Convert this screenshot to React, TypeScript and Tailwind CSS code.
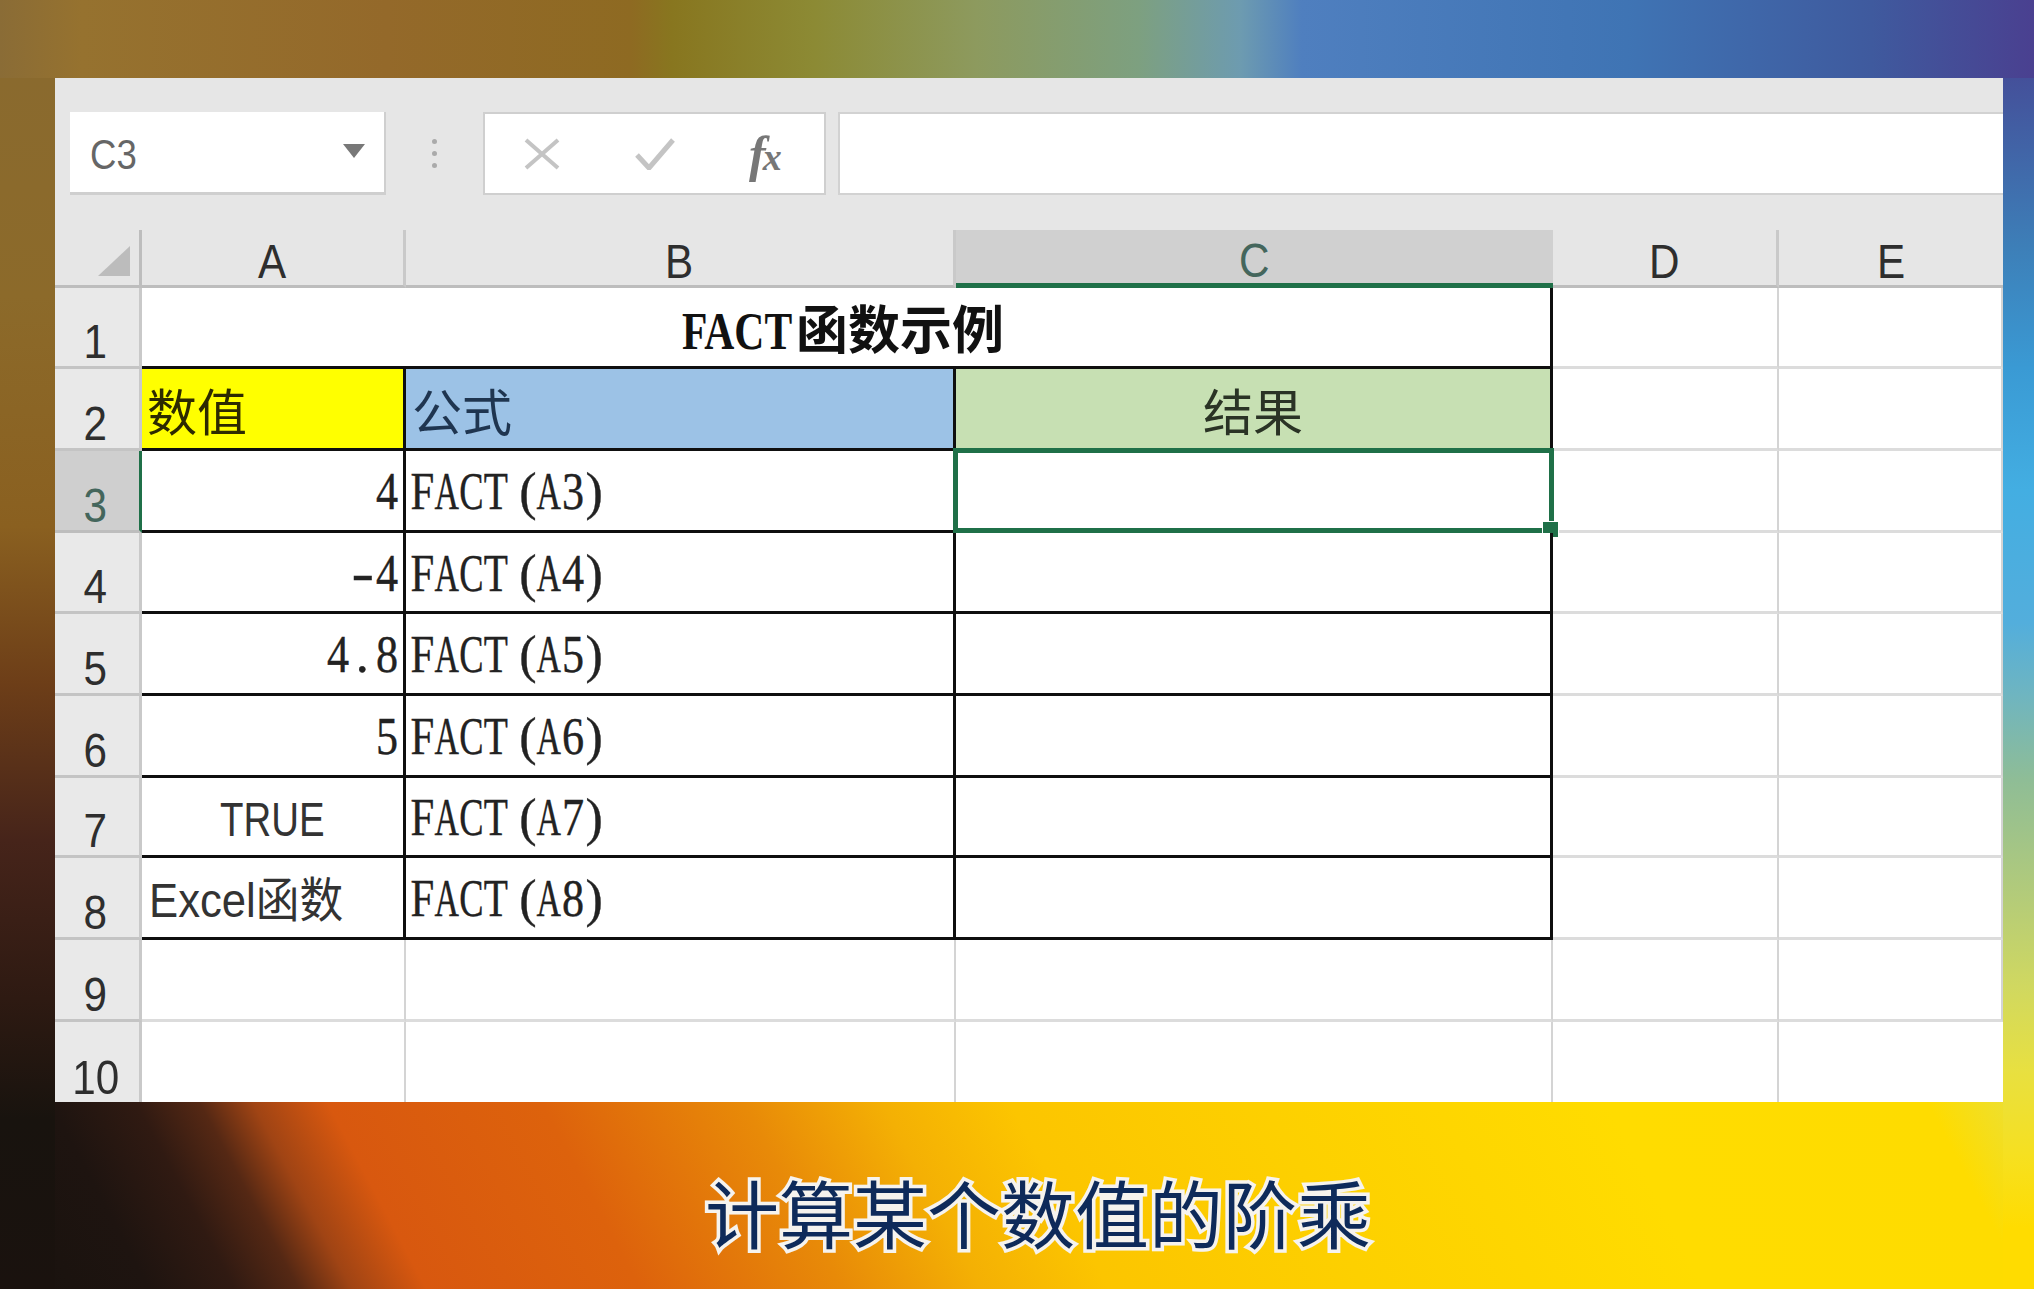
import React from "react";

const SANS = "font-['Liberation_Sans','Noto_Sans_CJK_SC',sans-serif]";
const CJK = "font-['Noto_Sans_CJK_SC',sans-serif]";

const FIT: Record<string, string> = {
  F: "scale-x-[0.82]",
  A: "scale-x-[0.65]",
  C: "scale-x-[0.7]",
  T: "scale-x-[0.76]",
  "-": "scale-x-[1.3]",
  ".": "",
  "(": "",
  ")": "",
};
const ALIGN: Record<string, string> = { "(": "justify-end w-[28.5px]", ")": "justify-start w-[28.5px]" };

function Mono({ text }: { text: string }) {
  return (
    <span className="inline-flex pt-[3px] font-['Liberation_Serif',serif] text-[52px] leading-none text-[#222] [-webkit-text-stroke:0.4px_#222]">
      {text.split("").map((c, i) => (
        <span key={i} className={`flex ${ALIGN[c] ?? "justify-center w-[24.5px]"}`}>
          <span className={`inline-block shrink-0 ${FIT[c] ?? "scale-x-[0.85]"}`}>{c}</span>
        </span>
      ))}
    </span>
  );
}

function ColHead({ label, active, last }: { label: string; active?: boolean; last?: boolean }) {
  return (
    <div
      className={
        active
          ? `flex items-end justify-center bg-[#d0d0d0] border-b-[5px] border-[#1f7048] text-[#44665c] text-[48px] leading-[44px] ${SANS}`
          : `flex items-end justify-center border-b-[3px] border-[#bdbdbd] pb-[1px] text-[#2e2e2e] text-[48px] leading-[44px] ${SANS} ${last ? "" : "border-r-[3px] border-r-[#c9c9c9]"}`
      }
    >
      <span className="inline-block scale-x-[0.88]">{label}</span>
    </div>
  );
}

function RowHead({ n, active, last }: { n: number; active?: boolean; last?: boolean }) {
  return (
    <div
      className={
        active
          ? `flex items-end justify-center bg-[#cfcfcf] border-r-[3px] border-r-[#1f7048] border-b-[3px] border-b-[#bdbdbd] pb-[1px] pr-[3px] text-[#44665c] text-[48px] leading-[46px] ${SANS}`
          : `flex items-end justify-center bg-[#e9e9e9] border-r-[3px] border-r-[#c9c9c9] ${last ? "" : "border-b-[3px] border-b-[#c4c4c4]"} pb-[1px] pr-[3px] text-[#2e2e2e] text-[48px] leading-[46px] ${SANS}`
      }
    >
      <span className="inline-block scale-x-[0.88]">{n}</span>
    </div>
  );
}

const LINE = "border-r-[3px] border-b-[3px] border-[#0f0f0f]";
const GRID = "border-r-[2px] border-b-[3px] border-r-[#d4d4d4] border-b-[#dcdcdc]";

function Blank() {
  return <div className={`bg-white ${GRID}`} />;
}

function DataRow({
  n,
  a,
  formula,
  selected,
}: {
  n: number;
  a: React.ReactNode;
  formula: string;
  selected?: boolean;
}) {
  return (
    <>
      <RowHead n={n} active={selected} />
      {a}
      <div className={`bg-white flex items-center pl-[4px] ${LINE}`}>
        <Mono text={formula} />
      </div>
      <div className={`bg-white relative ${LINE}`}>
        {selected && (
          <div className="absolute -top-[3px] -left-[3px] -right-[4px] -bottom-[3px] border-[5px] border-[#1f7048]">
            <div className="absolute -right-[10px] -bottom-[10px] w-[17px] h-[17px] bg-[#1f7048] border border-white" />
          </div>
        )}
      </div>
      <Blank />
      <Blank />
    </>
  );
}

function NumCell({ v }: { v: string }) {
  return (
    <div className={`bg-white flex items-center justify-end pr-[4px] ${LINE}`}>
      <Mono text={v} />
    </div>
  );
}

export default function App() {
  return (
    <div className="w-[2034px] h-[1289px] overflow-hidden flex flex-col pt-[78px] pl-[55px] pr-[31px] bg-[#8a6a28] bg-no-repeat bg-[linear-gradient(to_bottom,#8a6a2e_0%,#8c6a2a_18%,#8a6020_37%,#6d3e18_50%,#46241a_63%,#2e1a12_76%,#18130e_86%,#1a120e_100%),linear-gradient(to_bottom,#44509a_0%,#3d7fb8_14%,#3a9ad4_24%,#43aee2_34%,#53aedc_45%,#6fb5c0_51%,#8fbd96_58%,#b5cc78_68%,#d0d860_75%,#e8e040_82%,#f6e020_89%,#ffdc00_95%,#ffdc00_100%),linear-gradient(62deg,#18120e_0%,#1e1410_7%,#301a12_11%,#552814_14%,#a04414_16.5%,#d8580f_20%,#dd620c_30%,#e88a08_39.5%,#f4b004_46%,#fcc500_52%,#fdd000_64%,#ffdc00_80%,#fedc00_95%,#e8e040_100%),linear-gradient(to_right,#8a6c36_0%,#96722f_4%,#94692a_19%,#8e6a22_31%,#88761f_33%,#8c8a34_40%,#8d9a5e_48%,#7da080_56%,#6d9bb0_61%,#4f7fbf_64%,#3f74b4_80%,#3f5a9e_92%,#4a4090_100%)] bg-[length:55px_1211px,31px_1211px,2034px_187px,2034px_78px] bg-[position:0_78px,100%_78px,0_100%,0_0]">
      {/* spreadsheet window */}
      <div className="h-[1024px] shrink-0 flex flex-col bg-[#e6e6e6] blur-[0.7px]">
        {/* name box and formula bar */}
        <div className="h-[152px] shrink-0 flex items-start pt-[34px] pl-[15px]">
          <div className="w-[316px] h-[83px] shrink-0 bg-white border-b-[3px] border-r-[2px] border-[#cfcfcf] flex items-center justify-between pl-[20px] pr-[19px]">
            <span className={`inline-block origin-left scale-x-[0.85] pt-[5px] text-[43px] leading-none text-[#666] ${SANS}`}>C3</span>
            <svg width="22" height="14" viewBox="0 0 22 14" className="mb-[2px]">
              <path d="M0 0H22L11 14Z" fill="#787878" />
            </svg>
          </div>
          <div className="w-[97px] h-[83px] shrink-0 flex flex-col items-center justify-center gap-[7px]">
            <span className="w-[5px] h-[5px] rounded-full bg-[#aaaaaa]" />
            <span className="w-[5px] h-[5px] rounded-full bg-[#aaaaaa]" />
            <span className="w-[5px] h-[5px] rounded-full bg-[#aaaaaa]" />
          </div>
          <div className="w-[343px] h-[83px] shrink-0 bg-white border-2 border-[#cfcfcf] flex items-center pl-[38px] gap-[74px]">
            <svg width="38" height="32" viewBox="0 0 38 32" className="shrink-0">
              <path d="M3 2L35 30M35 2L3 30" stroke="#c4c4c4" strokeWidth="4" fill="none" />
            </svg>
            <svg width="40" height="32" viewBox="0 0 40 32" className="shrink-0">
              <path d="M2 17L14 30L38 2" stroke="#c4c4c4" strokeWidth="5" fill="none" />
            </svg>
            <span className="font-['Liberation_Serif',serif] italic font-bold text-[#777] text-[50px] leading-none flex items-end">
              f<span className="text-[38px] leading-none -ml-[3px] mb-[3px]">x</span>
            </span>
          </div>
          <div className="flex-1 h-[83px] ml-[12px] bg-white border-l-2 border-y-2 border-[#d2d2d2]" />
        </div>

        {/* sheet */}
        <div className="flex-1 grid grid-cols-[87px_264px_550px_597px_226px_224px] grid-rows-[58px_81px_82px_82px_81px_82px_82px_80px_82px_82px_80px]">
          <div className="border-b-[3px] border-r-[3px] border-[#bdbdbd] flex items-end justify-end pb-[9px] pr-[9px]">
            <svg width="32" height="30" viewBox="0 0 32 30">
              <path d="M32 0V30H0Z" fill="#bcbcbc" />
            </svg>
          </div>
          <ColHead label="A" />
          <ColHead label="B" />
          <ColHead label="C" active />
          <ColHead label="D" />
          <ColHead label="E" last />

          {/* row 1: merged title */}
          <RowHead n={1} />
          <div className={`col-span-3 bg-white flex items-center justify-center pt-[10px] pr-[6px] ${LINE}`}>
            <span className="font-['Liberation_Serif','Noto_Sans_CJK_SC',serif] font-bold text-[#111] text-[52px] leading-none whitespace-nowrap">
              <span className="inline-block w-[114px] origin-left scale-x-[0.8]">FACT</span>
              函数示例
            </span>
          </div>
          <Blank />
          <Blank />

          {/* row 2: headers */}
          <RowHead n={2} />
          <div className={`bg-[#ffff00] flex items-center pl-[5px] text-[#2d2a00] text-[50px] leading-none ${CJK} ${LINE}`}>数值</div>
          <div className={`bg-[#9cc2e6] flex items-center pl-[6px] text-[#1f3550] text-[50px] leading-none ${CJK} ${LINE}`}>公式</div>
          <div className={`bg-[#c7e0b3] flex items-center justify-center text-[#2a3325] text-[50px] leading-none ${CJK} ${LINE}`}>结果</div>
          <Blank />
          <Blank />

          <DataRow n={3} a={<NumCell v="4" />} formula="FACT(A3)" selected />
          <DataRow n={4} a={<NumCell v="-4" />} formula="FACT(A4)" />
          <DataRow n={5} a={<NumCell v="4.8" />} formula="FACT(A5)" />
          <DataRow n={6} a={<NumCell v="5" />} formula="FACT(A6)" />
          <DataRow
            n={7}
            a={
              <div className={`bg-white flex items-center justify-center pt-[6px] text-[#333] text-[48px] leading-none ${SANS} ${LINE}`}>
                <span className="inline-block scale-x-[0.8]">TRUE</span>
              </div>
            }
            formula="FACT(A7)"
          />
          <DataRow
            n={8}
            a={
              <div className={`bg-white flex items-center pl-[7px] pt-[6px] text-[#333] text-[48px] leading-none whitespace-nowrap ${SANS} ${LINE}`}>
                <span className="inline-block origin-left scale-x-[0.91]">Excel函数</span>
              </div>
            }
            formula="FACT(A8)"
          />

          {/* rows 9, 10 */}
          <RowHead n={9} />
          <Blank />
          <Blank />
          <Blank />
          <Blank />
          <Blank />
          <RowHead n={10} last />
          <div className="bg-white border-r-[2px] border-r-[#d4d4d4]" />
          <div className="bg-white border-r-[2px] border-r-[#d4d4d4]" />
          <div className="bg-white border-r-[2px] border-r-[#d4d4d4]" />
          <div className="bg-white border-r-[2px] border-r-[#d4d4d4]" />
          <div className="bg-white" />
        </div>
      </div>

      {/* caption */}
      <div className="flex-1 flex items-center justify-center pl-[18px] pt-[30px]">
        <span className={`text-[74px] leading-none font-normal text-[#0e2a5a] [-webkit-text-stroke:7px_#f6f3ee] [paint-order:stroke_fill] whitespace-nowrap ${CJK}`}>
          计算某个数值的阶乘
        </span>
      </div>
    </div>
  );
}
